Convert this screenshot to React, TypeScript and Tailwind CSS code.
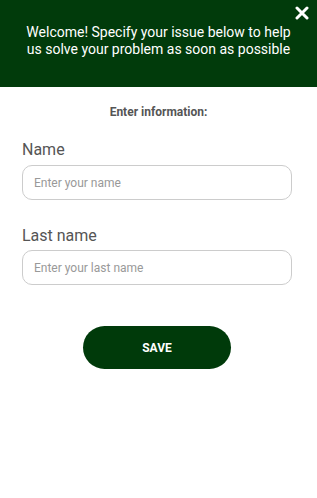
import React from 'react'

export default function App() {
  return (
    <div className="w-[317px] h-[498px] bg-white font-['Roboto',sans-serif]">
      {/* Header */}
      <div className="relative h-[87px] bg-[#013b0b] flex items-center justify-center px-6 pb-[5px]">
        <p className="text-white text-[14px] leading-[17px] text-center">
          Welcome! Specify your issue below to help us solve your problem as soon as possible
        </p>
        <button className="absolute top-[6px] right-[8px] text-white">
          <svg width="14" height="14" viewBox="0 0 14 14" fill="none" stroke="currentColor" strokeWidth={3} strokeLinecap="round">
            <path d="M2 2l10 10M12 2L2 12" />
          </svg>
        </button>
      </div>

      {/* Form */}
      <div className="px-[22px] pt-[18px]">
        <p className="text-center text-[12px] font-bold text-[#555] leading-[15px]">Enter information:</p>

        <label className="block mt-[20px] text-[16px] text-[#555] leading-[20px]">Name</label>
        <input
          className="mt-[5px] w-[270px] h-[35px] rounded-[10px] border border-[#ccc] px-[11px] text-[12px] outline-none placeholder:text-[#999]"
          placeholder="Enter your name"
        />

        <label className="block mt-[26px] text-[16px] text-[#555] leading-[20px]">Last name</label>
        <input
          className="mt-[4px] w-[270px] h-[35px] rounded-[10px] border border-[#ccc] px-[11px] text-[12px] outline-none placeholder:text-[#999]"
          placeholder="Enter your last name"
        />

        <div className="flex justify-center mt-[41px] pr-[3px]">
          <button className="w-[148px] h-[43px] rounded-full bg-[#003a0a] text-white text-[12px] font-bold">
            SAVE
          </button>
        </div>
      </div>
    </div>
  )
}
